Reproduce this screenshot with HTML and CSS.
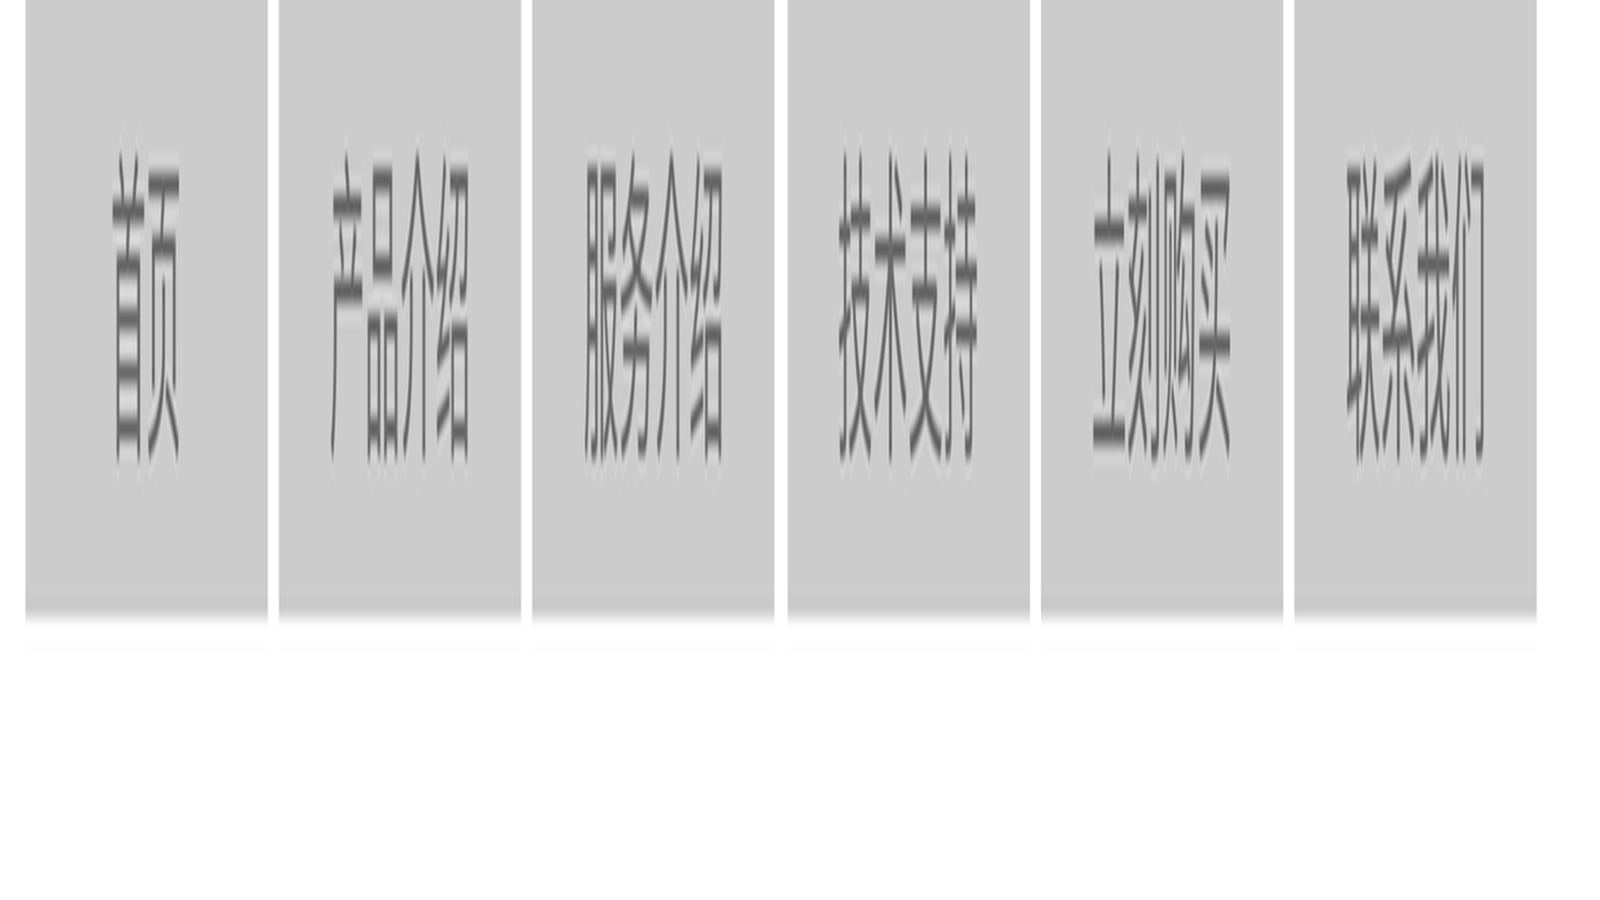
FILE: index.html
```html
<!DOCTYPE html>
<html>
<head>
<meta charset="utf-8">
<title>导航</title>
<link rel="stylesheet" href="styles.css">
</head>
<body>
<svg class="defs" aria-hidden="true" width="0" height="0">
  <filter id="soften" x="0" y="0" width="100%" height="100%" color-interpolation-filters="sRGB">
    <feConvolveMatrix id="softY" edgeMode="duplicate" preserveAlpha="true" order="1 3" kernelMatrix="0 1 0"/>
    <feConvolveMatrix id="softX" edgeMode="duplicate" preserveAlpha="true" order="3 1" kernelMatrix="0 1 0"/>
  </filter>
</svg>
<div class="frame">
  <nav class="stage">
    <a class="tab" href="#">首页</a>
    <a class="tab" href="#">产品介绍</a>
    <a class="tab" href="#">服务介绍</a>
    <a class="tab" href="#">技术支持</a>
    <a class="tab" href="#">立刻购买</a>
    <a class="tab" href="#">联系我们</a>
  </nav>
</div>
<script src="app.js"></script>
</body>
</html>
```
FILE: styles.css
```css
html, body {
  margin: 0;
  padding: 0;
  height: 100%;
  overflow: hidden;
  background: #fff;
}
.defs {
  display: block;
  height: 0;
}
.frame {
  width: 100%;
  height: 100%;
  overflow: hidden;
  background: #fff;
  filter: url(#soften);
}
.stage {
  display: flex;
  gap: 5.3px;
  padding-left: 11.7px;
  width: 728px;
  box-sizing: border-box;
  transform-origin: 0 0;
  transform: translate(-1px, 0) scale(2.203, 20.6);
  will-change: transform;
}
.tab {
  flex: 0 0 110px;
  height: 30px;
  line-height: 28px;
  text-align: center;
  font-family: "Noto Sans CJK JP", "Noto Sans CJK SC", sans-serif;
  font-size: 16px;
  color: #6b6b6b;
  background: #ccc;
  text-decoration: none;
}
```
FILE: app.js
```js
function lanczosKernel(scale) {
  var lobes = 3;
  var reach = Math.ceil(lobes * scale);
  var taps = [];
  var total = 0;
  function sinc(v) {
    return v === 0 ? 1 : Math.sin(Math.PI * v) / (Math.PI * v);
  }
  for (var i = -reach; i <= reach; i++) {
    var t = i / scale;
    var w = Math.abs(t) < lobes ? sinc(t) * sinc(t / lobes) : 0;
    taps.push(w);
    total += w;
  }
  return taps.map(function (w) { return (w / total).toFixed(5); });
}
var ky = lanczosKernel(15);
var kx = lanczosKernel(1.5);
var fy = document.getElementById('softY');
var fx = document.getElementById('softX');
fy.setAttribute('order', '1 ' + ky.length);
fy.setAttribute('targetY', String((ky.length - 1) / 2));
fy.setAttribute('kernelMatrix', ky.join(' '));
fx.setAttribute('order', kx.length + ' 1');
fx.setAttribute('targetX', String((kx.length - 1) / 2));
fx.setAttribute('kernelMatrix', kx.join(' '));
```
